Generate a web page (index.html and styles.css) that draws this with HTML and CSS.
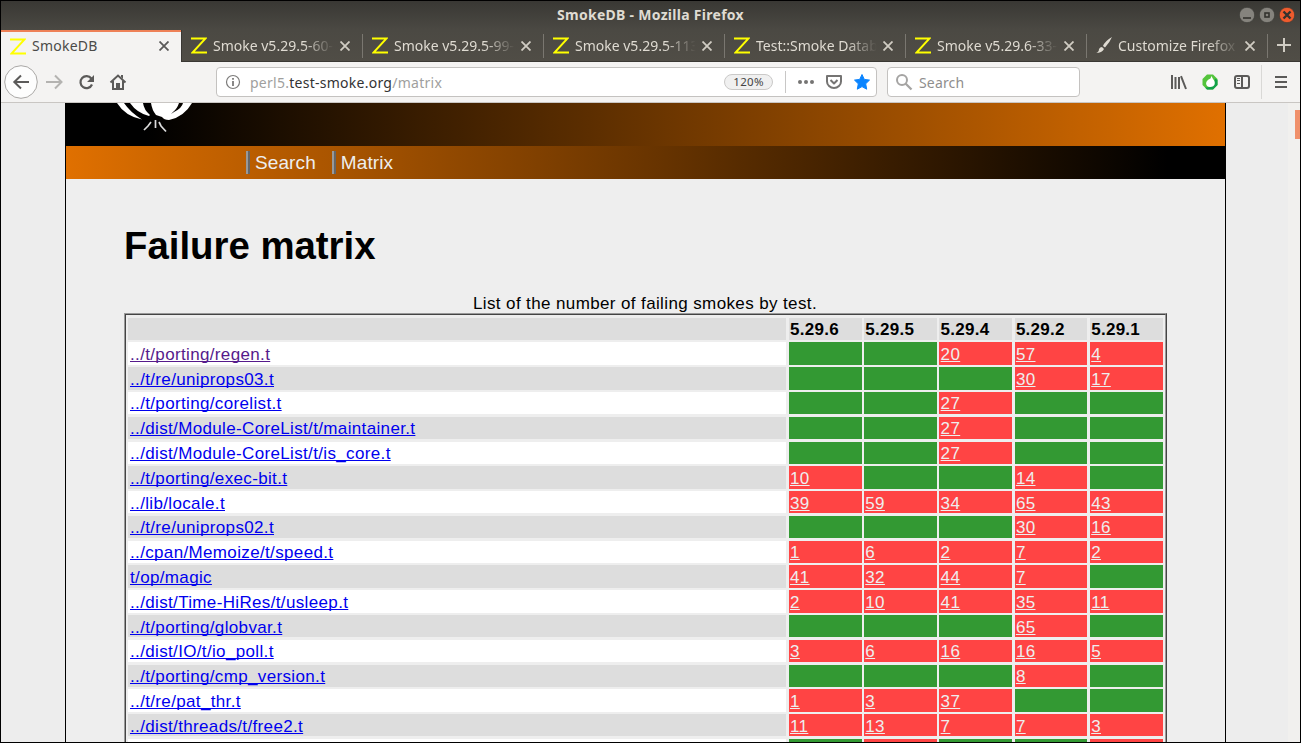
FILE: index.html
```html
<!DOCTYPE html>
<html lang="en">
<head>
<meta charset="utf-8">
<title>SmokeDB</title>
<link rel="stylesheet" href="styles.css">
</head>
<body>
<div class="window">
  <header class="titlebar">
    <span class="title">SmokeDB - Mozilla Firefox</span>
    <div class="controls">
      <svg width="16" height="17" viewBox="0 0 16 17"><circle class="ctl-gray" cx="8" cy="8" r="7.7"/><path class="ctl-mark" d="M4 11h8"/></svg>
      <svg width="16" height="17" viewBox="0 0 16 17"><circle class="ctl-gray" cx="8" cy="8" r="7.7"/><rect class="ctl-mark" x="6" y="6" width="4" height="4"/></svg>
      <svg width="16" height="17" viewBox="0 0 16 17"><circle class="ctl-red" cx="8" cy="8" r="7.7"/><path class="ctl-mark wide" d="M4.5 4.5l7 7m0-7l-7 7"/></svg>
    </div>
  </header>
  <nav class="tabs" id="tabs"></nav>
  <div class="toolbar">
    <svg class="nav-icons" width="134" height="40" viewBox="0 0 134 40">
      <circle cx="20" cy="20" r="16.3" fill="#fdfdfd" stroke="#aaa8a6"/>
      <g fill="none" stroke="#5b5a59" stroke-width="2">
        <path d="M13 20h15M20 13.5L13.3 20l6.700 6.500"/>
        <path stroke="#b4b3b1" d="M45 20h15M54 13.500l6.500 6.500-6.500 6.500"/>
        <path stroke-width="2.200" d="M90.300 16.500A6 6 0 1 0 91 22.500"/>
        <path d="M109.500 20.500l7.500-7 7.500 7M112 19v8h10v-8"/>
      </g>
      <path fill="#5b5a59" d="M93 13v7h-7zM115 21h4v6h-4z"/><path fill="#5b5a59" d="M120 13h2v4l-2-2z"/>
    </svg>
    <div class="urlbar">
      <svg width="16" height="16" viewBox="0 0 16 16"><circle cx="8" cy="8" r="6.500" fill="none" stroke="#7c7b7a" stroke-width="1.200"/><path stroke="#7c7b7a" stroke-width="1.800" d="M8 7v5M8 4v1.800"/></svg>
      <span class="url">perl5.<b>test-smoke.org</b>/matrix</span>
      <span class="zoom">120%</span>
      <i class="sep"></i>
      <svg class="page-actions" width="76" height="20" viewBox="0 0 76 20">
        <g fill="#757473"><circle cx="4" cy="10" r="2"/><circle cx="10" cy="10" r="2"/><circle cx="16" cy="10" r="2"/></g>
        <path fill="none" stroke="#757473" stroke-width="2" stroke-linejoin="round" d="M31 4h14v5.500a7 6.500 0 0 1-14 0zM34.500 8l3.500 3.500L41.500 8"/>
        <path fill="#0a84ff" stroke="#0a84ff" stroke-linejoin="round" d="M66 2.500l2.300 4.900 5.200.7-3.800 3.700 1 5.400-4.700-2.600-4.700 2.600 1-5.400-3.800-3.700 5.200-.7z"/>
      </svg>
    </div>
    <div class="searchbar">
      <svg width="18" height="18" viewBox="0 0 18 18"><circle cx="7" cy="7" r="5" fill="none" stroke="#a5a4a3" stroke-width="2"/><path stroke="#a5a4a3" stroke-width="2.300" d="M10.500 10.500l6 6"/></svg>
      <span>Search</span>
    </div>
    <svg class="tools" width="134" height="40" viewBox="0 0 134 40">
      <g fill="none" stroke="#5b5a59" stroke-width="2">
        <path d="M7 13v14M10.500 15v12M14 15v12M16 14.200l5 12.800"/>
        <rect x="70" y="14" width="14" height="12" rx="2"/><path d="M77 14v12"/><path stroke-width="1" d="M72 16.500h3M72 18.500h3M72 21.500h3"/>
        <path d="M110 15h12M110 20h12M110 25h12"/>
      </g>
      <path stroke="#d9d8d6" d="M96.500 3v34"/>
      <path fill="#54c43c" d="M42 12.500h6l4.500 4.500v6L48 27.500h-6L37.500 23v-6z"/>
      <path fill="#12a14a" d="M52.500 18v5L48 27.500h-6l-2-2q9 1 10-9z"/>
      <path fill="#fff" d="M46.500 14l-1 2.500c-6 2-5.500 8.500-.5 8.500 5.500 0 6-5 3-8z"/>
    </svg>
  </div>
  <main class="viewport">
    <div class="page">
      <div class="banner">
        <svg width="90" height="30" viewBox="0 0 90 30">
          <path fill="#fff" d="M6 0h7q6 9 18 16.500Q14 13 6 0zM19 0h13q1 7 7 12l-1 1Q26 10 19 0zM40 0h28q-2 6-6 9l-2 2 3-2Q71 5 72 0h9Q73 14 58 17q-5 0-7-3l-6-2q-4-5-5-12z"/>
          <path fill="none" stroke="#ddd" stroke-width="1.700" d="M40 19l-3 4-4 4M44.500 17v8M48 19l2 4 5 5.500"/>
        </svg>
      </div>
      <div class="menu"><a>Search</a><a>Matrix</a></div>
      <h1>Failure matrix</h1>
      <p class="caption">List of the number of failing smokes by test.</p>
      <div class="matrix-frame"><div class="matrix" id="matrix"></div></div>
    </div>
    <div class="scroll"><i></i></div>
  </main>
</div>
<script src="app.js"></script>
</body>
</html>
```
FILE: styles.css
```css
* { box-sizing: border-box; }
body { margin: 0; background: #000; font-family: "Liberation Sans", Arial, sans-serif; }
svg { display: block; flex: none; }
.window { width: 1301px; height: 743px; padding: 1px; overflow: hidden; display: flex; flex-direction: column; font-family: "Noto Sans", sans-serif; }
.titlebar { flex: none; height: 29px; display: flex; align-items: center; justify-content: center; background: linear-gradient(#393834, #4b4943); position: relative; }
.title { color: #dfdbd2; font-weight: 700; font-size: 14px; line-height: 20px; letter-spacing: .28px; padding-bottom: 2px; }
.controls { position: absolute; right: 5px; top: 6px; display: flex; gap: 4px; }
.ctl-gray { fill: #85837d; stroke: #3a3935; stroke-width: .7; }
.ctl-red { fill: #ee5b2d; stroke: #3a3935; stroke-width: .7; }
.ctl-mark { fill: none; stroke: #33322e; stroke-width: 1.6; }
.ctl-mark.wide { stroke-width: 2.4; }
.tabs { flex: none; height: 32px; display: flex; background: linear-gradient(#4b4943, #504d46); border-bottom: 1px solid #3a3834; }
.tab { width: 181px; padding: 0 13px 0 9px; display: flex; align-items: center; color: #dfdbd2; font-size: 14px; background: linear-gradient(#7a7770, #7a7770) right 4px / 1px 24px no-repeat; }
.tab .label { width: 122px; margin-left: 6px; white-space: nowrap; line-height: 22px; -webkit-mask-image: linear-gradient(90deg, #000 74%, transparent 99%); }
.tab .close { margin-left: auto; }
.tab.active { width: 180px; height: 32px; background: #f4f3f2; border-top: 2px solid #ee8157; color: #4b4a48; padding: 0 12px 2px 9px; }
.tab.active + .tab { border-left: 1px solid #3a3834; width: 182px; }
.tab.active .label { letter-spacing: .25px; -webkit-mask-image: none; }
.newtab { padding: 8px 0 0 8px; }
.toolbar { flex: none; height: 41px; display: flex; align-items: center; background: #f4f3f2; border-bottom: 1px solid #c9c6c3; }
.urlbar { flex: none; width: 661px; height: 30px; margin-left: 81px; border: 1px solid #c4c2c0; border-radius: 4px; background: #fff; display: flex; align-items: center; padding-left: 8px; }
.url { color: #a09f9e; font-size: 14px; margin-left: 9px; letter-spacing: .26px; }
.url b { font-weight: 400; color: #333; }
.zoom { margin-left: auto; width: 49px; height: 16px; border: 1px solid #cac9c8; border-radius: 8px; background: #f0f0f0; color: #444; font-size: 11.5px; line-height: 14px; text-align: center; letter-spacing: .3px; }
.sep { width: 1px; height: 22px; background: #c8c7c6; margin-left: 12px; }
.page-actions { margin: 0 4px 0 10px; }
.searchbar { flex: none; width: 193px; height: 30px; margin-left: 10px; border: 1px solid #c4c2c0; border-radius: 4px; background: #fff; display: flex; align-items: center; padding-left: 7px; color: #8f8e8d; font-size: 14px; letter-spacing: .15px; }
.searchbar span { margin-left: 6px; }
.tools { margin-left: 85px; }
.viewport { flex: 1; min-height: 0; overflow: hidden; display: flex; background: #ededed; font-family: "Liberation Sans", Arial, sans-serif; }
.page { flex: none; width: 1161px; height: 660px; margin-left: 64px; border: solid #000; border-width: 0 1px; background: #eee; }
.banner { height: 43px; margin-left: -1px; padding-left: 46px; background: linear-gradient(90deg, #000 7%, #e07000); }
.menu { height: 33px; padding: 5px 0 0 180px; display: flex; background: linear-gradient(90deg, #e07000, #000 95%); }
.menu a { height: 23px; line-height: 23px; border-left: 2px solid #999; box-shadow: inset 2px 0 #666; padding-left: 7px; margin-right: 16px; color: #eee; font-size: 19px; letter-spacing: .1px; }
h1 { margin: 44px 0 0 58px; font-size: 38.4px; line-height: 46px; letter-spacing: -.02px; }
.caption { margin: 24px 0 0 58px; width: 1042px; height: 20px; font-size: 17px; line-height: 21px; text-align: center; letter-spacing: .38px; }
.matrix-frame { margin-left: 58px; width: 1043px; border: 1px solid #999; border-right-color: #444; }
.matrix { border: 1px solid #444; border-right-color: #999; border-bottom: 0; padding: 2.6px 1.6px 0; display: grid; grid-template-columns: 658.7px repeat(5, 72.97px); grid-auto-rows: 22.4px; gap: 2.4px 2.33px; font-size: 17px; line-height: 22.4px; letter-spacing: .35px; }
.matrix > * { padding: 1.55px 0 0 1.4px; white-space: nowrap; }
.matrix > .head { padding-top: 1.4px; background: #ddd; font-weight: 700; letter-spacing: .27px; }
.matrix > .odd { padding-left: 2.4px; background: #fff; color: #00e; }
.matrix > .even { padding-left: 2.4px; background: #ddd; color: #00e; }
.visited { color: #551a8b; }
.ok { background: #393; }
.bad { background: #f44; color: #eee; }
.matrix a { text-decoration: underline; text-decoration-skip-ink: none; }
.scroll { margin-left: auto; width: 12px; padding: 7px 0 0 7px; background: #f1f0ee; }
.scroll i { display: block; width: 5px; height: 29px; background: #f0906a; }
```
FILE: app.js
```js
const z = '<svg width="16" height="17" viewBox="0 0 16 17"><path fill="none" stroke="#ff0" stroke-width="2" d="M0 1.500h14.500L1.500 15.500H16"/></svg>';
const brush = '<svg width="16" height="17" viewBox="0 0 16 17"><path fill="#dfdbd2" d="M16 0q-7 4-9 9l2 1.500Q14 5 16 0zM6 10l2 2q-2 4-8 4 3-1 3-4 1-2 3-2z"/></svg>';
const close = c => `<svg class="close" width="10" height="10" viewBox="0 0 10 10"><path stroke="${c}" stroke-width="1.800" d="M.5.500l9 9m0-9l-9 9"/></svg>`;
const names = ['SmokeDB', 'Smoke v5.29.5-60-', 'Smoke v5.29.5-99-', 'Smoke v5.29.5-113', 'Test::Smoke Datab', 'Smoke v5.29.6-33-', 'Customize Firefox'];
document.getElementById('tabs').innerHTML = names.map((n, i) =>
  `<div class="tab${i ? '' : ' active'}">${i === 6 ? brush : z}<span class="label">${n}</span>${close(i ? '#d0ccc3' : '#5b5a59')}</div>`).join('') +
  '<div class="newtab"><svg width="16" height="14" viewBox="0 0 16 14"><path stroke="#d0ccc3" stroke-width="2" d="M1 7h14M8 0v14"/></svg></div>';

const rows = [
  ['../t/porting/regen.t', '', '', 20, 57, 4],
  ['../t/re/uniprops03.t', '', '', '', 30, 17],
  ['../t/porting/corelist.t', '', '', 27, '', ''],
  ['../dist/Module-CoreList/t/maintainer.t', '', '', 27, '', ''],
  ['../dist/Module-CoreList/t/is_core.t', '', '', 27, '', ''],
  ['../t/porting/exec-bit.t', 10, '', '', 14, ''],
  ['../lib/locale.t', 39, 59, 34, 65, 43],
  ['../t/re/uniprops02.t', '', '', '', 30, 16],
  ['../cpan/Memoize/t/speed.t', 1, 6, 2, 7, 2],
  ['t/op/magic', 41, 32, 44, 7, ''],
  ['../dist/Time-HiRes/t/usleep.t', 2, 10, 41, 35, 11],
  ['../t/porting/globvar.t', '', '', '', 65, ''],
  ['../dist/IO/t/io_poll.t', 3, 6, 16, 16, 5],
  ['../t/porting/cmp_version.t', '', '', '', 8, ''],
  ['../t/re/pat_thr.t', 1, 3, 37, '', ''],
  ['../dist/threads/t/free2.t', 11, 13, 7, 7, 3],
  ['', '', ' ', '', '', ' ']
];
document.getElementById('matrix').innerHTML =
  ['', '5.29.6', '5.29.5', '5.29.4', '5.29.2', '5.29.1'].map(h => `<div class="head">${h}</div>`).join('') +
  rows.map((r, i) => r.map((v, c) => c
    ? `<div class="${v === '' ? 'ok' : 'bad'}"><a>${v}</a></div>`
    : `<div class="${i % 2 ? 'even' : 'odd'}"><a${i ? '' : ' class="visited"'}>${v}</a></div>`).join('')).join('');
```
